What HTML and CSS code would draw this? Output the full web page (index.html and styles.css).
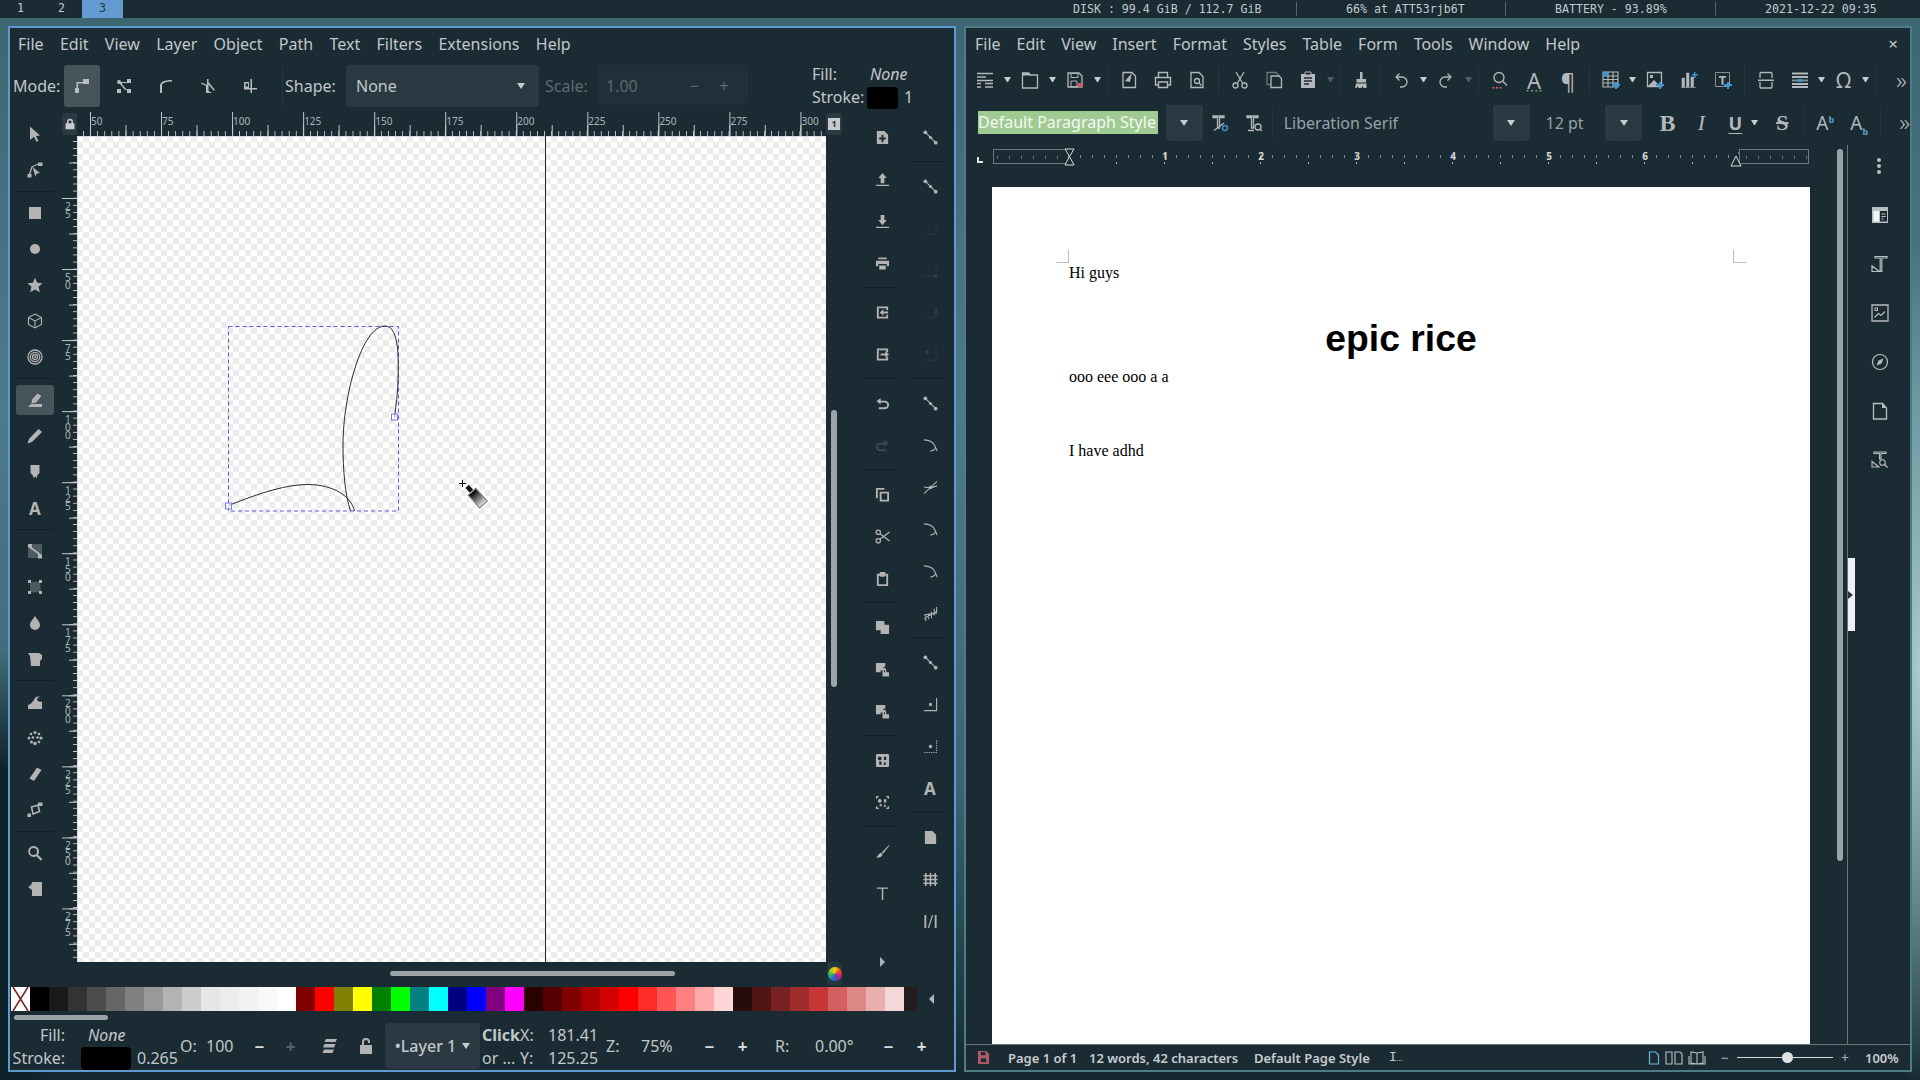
FILE: index.html
```html
<!DOCTYPE html>
<html lang="en">
<head>
  <meta charset="UTF-8">
  <title>Desktop</title>
  <link rel="stylesheet" href="styles.css">
</head>
<body>
  <svg class="defs" xmlns="http://www.w3.org/2000/svg">
    <defs>
      <linearGradient id="bottle" x1="0" y1="0" x2="0" y2="1"><stop offset="0" stop-color="#000"/><stop offset="1" stop-color="#ddd"/></linearGradient>
    </defs>
    <!-- inkscape tools -->
    <symbol id="sel" viewBox="0 0 16 16"><path d="M3 .5l10 9-4 .4 2.4 5-2 .9-2.3-5L3 14z"/></symbol>
    <symbol id="node" viewBox="0 0 16 16"><path d="M.5 12h4v3.500h-4zM11 .5h4.500v3.500H11zM2 12l2.400-7.500L11 1.600l.4 1L5.500 5.300 3.500 12zM5.500 5l7.500 6-3.500.8-1 3.200z"/></symbol>
    <symbol id="rect" viewBox="0 0 16 16"><rect x="2" y="2" width="12" height="12"/></symbol>
    <symbol id="circ" viewBox="0 0 16 16"><circle cx="8" cy="8" r="5"/></symbol>
    <symbol id="star" viewBox="0 0 16 16"><path d="M8 .8l2.200 5 5.300.4-4 3.600 1.300 5.400L8 12.400l-4.800 2.800 1.300-5.400-4-3.600 5.300-.4z"/></symbol>
    <symbol id="box3d" viewBox="0 0 16 16"><path d="M8 1l6.500 3.500v7L8 15l-6.500-3.500v-7zM1.500 4.500L8 8l6.500-3.500M8 8v7" fill="none" stroke="currentColor" stroke-width="1.100"/></symbol>
    <symbol id="spiral" viewBox="0 0 16 16"><circle cx="8" cy="8" r="7" fill="none" stroke="currentColor" stroke-width="1.300"/><circle cx="8" cy="8" r="4.700" fill="none" stroke="currentColor" stroke-width="1.300"/><circle cx="8" cy="8" r="2.500" fill="none" stroke="currentColor" stroke-width="1.300"/><circle cx="8" cy="8" r="1"/></symbol>
    <symbol id="pen" viewBox="0 0 16 16"><path d="M10.500 1.500l4 2.500-5.500 6.500-4.500 1L5 7.500zM1 15l3-3h11v3z"/></symbol>
    <symbol id="pencil" viewBox="0 0 16 16"><path d="M11.500 1l3.500 3L5 14l-4.500 1.500L2 11z"/></symbol>
    <symbol id="nib" viewBox="0 0 16 16"><path d="M3.500 1h9v8l-2 2-1 3.500L8 12l-1 2.500L5.500 11l-2-2z"/></symbol>
    <symbol id="grad" viewBox="0 0 16 16"><rect x="1" y="1" width="14" height="14" fill="#4d5a61"/><path d="M1 1h4v3.500L15 12v3.500h-4V11L1 4z"/></symbol>
    <symbol id="mesh" viewBox="0 0 16 16"><path d="M3 3l10-.5 1 10.500-11 .5z" fill="#4d5a61"/><path d="M1 1h3v3H1zM12 1h3v3h-3zM1 12h3v3H1zM12 12h3v3h-3z"/></symbol>
    <symbol id="drop" viewBox="0 0 16 16"><path d="M8 1c1.500 3 5 5.500 5 9a5 5 0 01-10 0c0-3.500 3.500-6 5-9z"/></symbol>
    <symbol id="bucket" viewBox="0 0 16 16"><path d="M1 2h11l3 2v4l-2 2v5H4L3 5z"/></symbol>
    <symbol id="tweak" viewBox="0 0 16 16"><path d="M1 15v-4l3-1.500 3-3.500c.5-3 4-4.500 6.500-3-2-.2-3.800 1-3.300 3 .5 1.500 2.300 2 4.800 1.500V15z"/></symbol>
    <symbol id="spray" viewBox="0 0 16 16"><circle cx="8" cy="2.500" r="1.500"/><circle cx="4" cy="4" r="1.300"/><circle cx="12" cy="4" r="1.300"/><circle cx="2" cy="8" r="1.500"/><circle cx="6" cy="7.500" r="1.300"/><circle cx="10.500" cy="7.500" r="1.300"/><circle cx="14" cy="8" r="1.600"/><circle cx="4.500" cy="12" r="1.500"/><circle cx="8" cy="13.500" r="1.800"/><circle cx="12" cy="12" r="1.300"/></symbol>
    <symbol id="eraser" viewBox="0 0 16 16"><path d="M10 1.500l4.500 2.500L7 15l-4.500-2.500z"/></symbol>
    <symbol id="conn" viewBox="0 0 16 16"><path d="M4.500 5L11 3l1.500 6.500L6 12z" fill="none" stroke="currentColor" stroke-width="1.600"/><path d="M11 .5h4.500V4H11zM.5 11.500H4V15H.5z"/></symbol>
    <symbol id="zoom" viewBox="0 0 16 16"><path d="M6.500 1a5.500 5.500 0 014.400 8.800l4.500 4.500-1.500 1.500-4.500-4.500A5.500 5.500 0 116.500 1zm0 2a3.500 3.500 0 100 7 3.500 3.500 0 000-7z" fill-rule="evenodd"/></symbol>
    <symbol id="page" viewBox="0 0 16 16"><path d="M5 1h10v14H5V9L1 6l2.500-.5L1 4l3 .5z"/></symbol>
    <!-- inkscape commands -->
    <symbol id="newdoc" viewBox="0 0 16 16"><path d="M2 1h8l4 4v10H2zM7 5v3H4.500v2H7v3h2v-3h2.500V8H9V5z" fill-rule="evenodd"/></symbol>
    <symbol id="up" viewBox="0 0 16 16"><path d="M8 1l4.500 5.500H10V12H6V6.500H3.500zM1 13.500h14V15H1z"/></symbol>
    <symbol id="down" viewBox="0 0 16 16"><path d="M6 1h4v5.500h2.500L8 12 3.500 6.500H6zM1 13.500h14V15H1z"/></symbol>
    <symbol id="print" viewBox="0 0 16 16"><path d="M3.500 1.500h9v2h-9zM1 5h14v6h-2.500V8.500h-9V11H1zM4.500 10h7v4.500h-7z"/></symbol>
    <symbol id="imp" viewBox="0 0 16 16"><path d="M2 1.500h12v4h-2v-2H4v9h8v-2h2v4H2zM14 7H9V4.500L5 8l4 3.500V9h5z"/></symbol>
    <symbol id="exp" viewBox="0 0 16 16"><path d="M2 1.500h12v4h-2v-2H4v9h8v-2h2v4H2zM6 7h5V4.500L15 8l-4 3.500V9H6z"/></symbol>
    <symbol id="undo" viewBox="0 0 16 16"><path d="M6 2L1.500 5.500 6 9V7h4.500a2.500 2.500 0 010 5H4v2h6.500a4.500 4.500 0 000-9H6z"/></symbol>
    <symbol id="redo" viewBox="0 0 16 16"><path d="M10 2l4.500 3.500L10 9V7H5.500a2.500 2.500 0 000 5H12v2H5.500a4.500 4.500 0 010-9H10z"/></symbol>
    <symbol id="copy" viewBox="0 0 16 16"><path d="M1 1h9v2H3v9H1zM5 5h10v10.500H5zm2 2v6.500h6V7z" fill-rule="evenodd"/></symbol>
    <symbol id="cut" viewBox="0 0 16 16"><circle cx="3.500" cy="3.500" r="2.300" fill="none" stroke="currentColor" stroke-width="1.400"/><circle cx="3.500" cy="12.500" r="2.300" fill="none" stroke="currentColor" stroke-width="1.400"/><path d="M5.300 5L15.500 12.800M5.300 11L15.500 3.200" fill="none" stroke="currentColor" stroke-width="1.500"/></symbol>
    <symbol id="paste" viewBox="0 0 16 16"><path d="M5 1h6v2h3v13H2V3h3zm-1 4v9h8V5h-1.500v1h-5V5z" fill-rule="evenodd"/></symbol>
    <symbol id="dup" viewBox="0 0 16 16"><path d="M1 1h9v4h5v10H6v-4H1z"/></symbol>
    <symbol id="clone" viewBox="0 0 16 16"><path d="M1 1h10v4H9v4H6v2H1zM8 11V8.500a2 2 0 014 0V11h3v4.500H8zm1.500-2.500V11h1V8.500z"/></symbol>
    <symbol id="group" viewBox="0 0 16 16"><path d="M2.500 1h11A1.500 1.500 0 0115 2.500v11a1.500 1.500 0 01-1.500 1.500h-11A1.500 1.500 0 011 13.500v-11A1.500 1.500 0 012.500 1zM6 4a2 2 0 100 3.500A2 2 0 006 4zm3.500 0v3.500H12V4zm-5 5v3.500H7V9zm6 0L9 12.500h3z" fill-rule="evenodd"/></symbol>
    <symbol id="ungroup" viewBox="0 0 16 16"><path d="M1 4V1h3v1.500H2.500V4zM12 1h3v3h-1.500V2.500H12zM1 12h1.500v1.500H4V15H1zM15 12v3h-3v-1.500h1.500V12zM6 4.500a2 2 0 100 3.500 2 2 0 000-3.500zm3.500 0V8H12V4.500zM5 9.500V12h2V9.500zm5.500 0L9 12.500h3z"/></symbol>
    <symbol id="brush" viewBox="0 0 16 16"><path d="M15 1L7 9l1.500 1.500L15.500 1.500zM6.500 9.500c-2.500 0-3 3-5.500 5 3 .5 7-.5 7-3.500z"/></symbol>
    <symbol id="bigt" viewBox="0 0 16 16"><path d="M2 1.500h12V3H8.800v12H7.200V3H2z"/></symbol>
    <!-- snap bar -->
    <symbol id="sn1" viewBox="0 0 16 16"><path d="M2 2l11 11" stroke="currentColor" stroke-width="1.200" fill="none"/><circle cx="2.500" cy="2.500" r="2"/><circle cx="8" cy="8" r="1.700"/><circle cx="13.500" cy="13.500" r="2"/></symbol>
    <symbol id="sn2" viewBox="0 0 16 16"><path d="M1.500 14h12.500V1" fill="none" stroke="currentColor" stroke-dasharray="1.200 1"/></symbol>
    <symbol id="sn3" viewBox="0 0 16 16"><path d="M1.500 14h11.500M14 1v11" fill="none" stroke="currentColor" stroke-dasharray="1.200 1"/><rect x="12" y="12" width="3" height="3"/></symbol>
    <symbol id="sn4" viewBox="0 0 16 16"><path d="M1.500 14h12.500V1" fill="none" stroke="currentColor" stroke-dasharray="1.200 1"/><rect x="12.500" y="6" width="3" height="3"/></symbol>
    <symbol id="sn5" viewBox="0 0 16 16"><path d="M1.500 14h12.500V1" fill="none" stroke="currentColor" stroke-dasharray="1.200 1"/><rect x="3" y="4" width="3" height="3"/></symbol>
    <symbol id="sn6" viewBox="0 0 16 16"><path d="M1 2c5 0 10 2 12 7 .5 2 0 4-5 5M13 9c.5 1 1.500 3 2 5" fill="none" stroke="currentColor" stroke-width="1.100"/></symbol>
    <symbol id="sn7" viewBox="0 0 16 16"><path d="M1 14.500L15 1.500M1 7.500c5 1 9 1 14-1" fill="none" stroke="currentColor" stroke-width="1.100"/><circle cx="8" cy="8" r="1.800"/></symbol>
    <symbol id="sn8" viewBox="0 0 16 16"><path d="M1 13.500l14-8M1 9.500l14-2M3 10v6M6 8v6M9 6v7M12 3v7M14.500 1v6" fill="none" stroke="currentColor" stroke-width="1.100"/></symbol>
    <symbol id="sn9" viewBox="0 0 16 16"><path d="M1 14.500h13.500V1" fill="none" stroke="currentColor" stroke-width="1.200"/><rect x="6.500" y="6.500" width="3" height="3"/></symbol>
    <symbol id="sn10" viewBox="0 0 16 16"><path d="M1 14.500h13.500V1" fill="none" stroke="currentColor" stroke-dasharray="1.500 1"/><circle cx="8" cy="8" r="1.800"/></symbol>
    <symbol id="snpage" viewBox="0 0 16 16"><path d="M2 1h8l4 4v10H2z"/></symbol>
    <symbol id="sngrid" viewBox="0 0 16 16"><path d="M.5 4h15M.5 8h15M.5 12h15M3 1v14M8 1v14M13 1v14" fill="none" stroke="currentColor" stroke-width="1.700"/></symbol>
    <symbol id="snguide" viewBox="0 0 16 16"><path d="M1.500 1h2v14h-2zM12.500 1h2v14h-2zM9.500 1l1.300.4L6.500 15l-1.300-.4z"/></symbol>
    <!-- ctl bar modes -->
    <symbol id="m1" viewBox="0 0 16 16"><path d="M1 10h4v5H1zM2.500 4H9V1h6v5H9V5.500H4V10H2.500z"/></symbol>
    <symbol id="m2" viewBox="0 0 16 16"><path d="M1 11h4v4H1zM11 1h4v4h-4zM11 11h4v4h-4zM3 2a2 2 0 110 4 2 2 0 010-4zM5 4h6v1H6v1L11 12H9L4 6z"/></symbol>
    <symbol id="m3" viewBox="0 0 16 16"><path d="M2 15V8c0-4 4-6 12-6v1.500C7 3.500 4 5 4 8v7z"/></symbol>
    <symbol id="m4" viewBox="0 0 16 16"><path d="M7 1h1.500v3L15 12l-1 1-5.500-6.500V13L12 15H6V8L1 5.500l.5-1L7 7z"/></symbol>
    <symbol id="m5" viewBox="0 0 16 16"><path d="M2 4h5v6H2zM8.500 1H10v9h5v1.500h-5V15H8.500V11.500H2V10h6.500zM3.500 5.500v3H6v-3z" fill-rule="evenodd"/></symbol>
    <symbol id="layers" viewBox="0 0 16 16"><path d="M4 1h11l-1.500 3H2.500zM2.500 6h11L12 9.500H1zM2 11.500h10L10.500 15H.5z"/></symbol>
    <symbol id="lock" viewBox="0 0 16 16"><path d="M8 1a4 4 0 014 4v2h2v8H2V7h2V5a4 4 0 014-4zm0 2a2 2 0 00-2 2v2h4V5a2 2 0 00-2-2z" fill-rule="evenodd"/></symbol>
    <symbol id="unlock" viewBox="0 0 16 16"><path d="M8 0a4 4 0 014 4v1h-2V4a2 2 0 00-4 0v3h8v9H2V7h2V4a4 4 0 014-4z"/></symbol>
    <!-- writer -->
    <symbol id="w-tmpl" viewBox="0 0 18 18"><path d="M1 2.500h16M1 6h9M1 9.500h16M1 12.500h4M9 12.500h8M1 16h4M9 16h8" fill="none" stroke="currentColor" stroke-width="1.300"/></symbol>
    <symbol id="w-open" viewBox="0 0 18 18"><path d="M1.500 2h6l2 2h7v13h-15z" fill="none" stroke="currentColor" stroke-width="1.300"/><path d="M2 2h6l1.500 2.500H2z"/></symbol>
    <symbol id="w-save" viewBox="0 0 18 18"><path d="M2 2h11l3 3v11H2z" fill="none" stroke="currentColor" stroke-width="1.300"/><path d="M5 2.500h7v4H5zM5 10h6v6H5z" fill="none" stroke="currentColor"/><circle cx="14" cy="14" r="2.300" fill="#e54d5e"/></symbol>
    <symbol id="w-pdf" viewBox="0 0 18 18"><path d="M3 1.500h9l3.500 3.500v11.500H3z" fill="none" stroke="currentColor" stroke-width="1.300"/><path d="M12 2l-7 8 5 1 1-5z"/></symbol>
    <symbol id="w-print" viewBox="0 0 18 18"><path d="M4.500 6V1.500h9V6M4.500 14H1.500V6.500h15V14h-3M4.500 11h9v5.500h-9z" fill="none" stroke="currentColor" stroke-width="1.400"/></symbol>
    <symbol id="w-prev" viewBox="0 0 18 18"><path d="M3 1.500h8l4 4v11H3z" fill="none" stroke="currentColor" stroke-width="1.300"/><circle cx="9" cy="10" r="2.500" fill="none" stroke="currentColor" stroke-width="1.300"/><path d="M11 12l2.500 2.500" stroke="currentColor" stroke-width="1.300"/></symbol>
    <symbol id="w-cut" viewBox="0 0 18 18"><path d="M5 1l6.500 11M13 1L6.500 12" fill="none" stroke="currentColor" stroke-width="1.300"/><circle cx="4.500" cy="14.500" r="2.500" fill="none" stroke="currentColor" stroke-width="1.300"/><circle cx="13.500" cy="14.500" r="2.500" fill="none" stroke="currentColor" stroke-width="1.300"/></symbol>
    <symbol id="w-copy" viewBox="0 0 18 18"><path d="M2 1.500h9l3 3v9H2z" fill="none" stroke="currentColor" stroke-opacity=".55" stroke-width="1.300"/><path d="M6 5h8l2.500 2.500v9H6z" fill="#1b2b34" stroke="currentColor" stroke-width="1.300"/></symbol>
    <symbol id="w-paste" viewBox="0 0 18 18"><path d="M2 3h14v14H2z"/><path d="M6 1h6v3H6z" fill="#1b2b34" stroke="currentColor"/><path d="M5 7h8M5 10h8M5 13h5" stroke="#1b2b34" stroke-width="1.300"/></symbol>
    <symbol id="w-clone" viewBox="0 0 18 18"><path d="M8 1h2.500v7H14v3.500H4.500V8H8zM4 12.500h10.500V17h-3l-1-2-1 2h-3l-1-2-1 2H3z"/></symbol>
    <symbol id="w-undo" viewBox="0 0 18 18"><path d="M5 6h5a4.500 4.500 0 010 10h-2M7.500 2.500L4 6l3.500 3.500" fill="none" stroke="currentColor" stroke-width="1.300"/></symbol>
    <symbol id="w-redo" viewBox="0 0 18 18"><path d="M13 6H8a4.500 4.500 0 000 10h2M10.500 2.500L14 6l-3.500 3.500" fill="none" stroke="currentColor" stroke-width="1.300"/></symbol>
    <symbol id="w-find" viewBox="0 0 18 18"><circle cx="8" cy="6.500" r="5" fill="none" stroke="currentColor" stroke-width="1.300"/><path d="M12 10.500l4 4" stroke="currentColor" stroke-width="1.500"/><path d="M1.500 16h2v1.500h-2zM5 16h2v1.500H5zM8.500 16h2v1.500h-2z" fill="#d9646a"/></symbol>
    <symbol id="w-spell" viewBox="0 0 18 18"><path d="M1.500 16h2v1.500h-2zM6 16h2v1.500H6zM10.500 16h2v1.500h-2zM14.500 16h2v1.500h-2z" fill="#63a663"/></symbol>
    <symbol id="w-table" viewBox="0 0 18 18"><path d="M1 1h15v15H1zM1 5h15M1 8.500h15M1 12h15M6 1v15M11 1v15" fill="none" stroke="currentColor" stroke-width="1.100"/><path d="M1 1h5v4H1z" fill="#3d97d3"/><path d="M13 11h2v2h3v2h-3v3h-2v-3h-3v-2h3z" fill="#3d97d3"/></symbol>
    <symbol id="w-img" viewBox="0 0 18 18"><path d="M1.500 1.500h14v14h-14z" fill="none" stroke="currentColor" stroke-width="1.300"/><path d="M2 15l6-6 6 6z"/><rect x="4" y="4" width="3" height="3"/><path d="M13 11h2v2h3v2h-3v3h-2v-3h-3v-2h3z" fill="#3d97d3"/></symbol>
    <symbol id="w-chart" viewBox="0 0 18 18"><path d="M2 7h2.500v9H2zM6.500 2h2.500v14H6.500zM11 6h2.500v10H11zM1 16.500h15" stroke="currentColor" stroke-width=".6"/><path d="M14 1h1.500v2H18v1.500h-2.500V7H14V4.500h-2V3h2z" fill="#3d97d3"/></symbol>
    <symbol id="w-tbox" viewBox="0 0 18 18"><path d="M1.500 1.500h14v14h-14z" fill="none" stroke="currentColor" stroke-opacity=".7"/><path d="M5 5h7v1.800H9.500v7h-2v-7H5z"/><path d="M13 11h2v2h3v2h-3v3h-2v-3h-3v-2h3z" fill="#3d97d3"/></symbol>
    <symbol id="w-break" viewBox="0 0 18 18"><path d="M3 7V2.500A1 1 0 014 1.500h10a1 1 0 011 1V7M3 11v5a1 1 0 001 1h10a1 1 0 001-1v-5" fill="none" stroke="currentColor" stroke-width="1.300"/><path d="M1 8.500h16v1.500H1z"/></symbol>
    <symbol id="w-field" viewBox="0 0 18 18"><path d="M1 1.500h16v2H1zM1 5h16v2H1zM1 12h16v2H1zM1 15h16v2H1z"/><path d="M1 8.500h16v2H1z" opacity=".7"/><rect x="7" y="8" width="4" height="3" fill="#3d97d3"/></symbol>
    <symbol id="w-clear1" viewBox="0 0 18 18"><path d="M2 2h11v1.500H8.500V14h-2V3.500H2zM3 16.500L13 9" fill="none" stroke="currentColor" stroke-width="1.300"/><circle cx="14" cy="14" r="2.500" fill="none" stroke="#3d97d3" stroke-width="1.300"/></symbol>
    <symbol id="w-clear2" viewBox="0 0 18 18"><path d="M2 2h11v1.500H8.500V14h-2V3.500H2zM3 16.500h6" fill="none" stroke="currentColor" stroke-width="1.300"/><circle cx="13" cy="13" r="3" fill="none" stroke="currentColor" stroke-width="1.300"/><path d="M15 15l2 2" stroke="currentColor" stroke-width="1.300"/></symbol>
    <symbol id="s-deck" viewBox="0 0 18 18"><path d="M1 1h16v16H1z"/><path d="M2.500 5H8v10.500H2.500z" fill="#f2f4f5"/><path d="M9 5h7v10.500H9z" fill="#1b2b34"/><path d="M10.500 8h4M10.500 10.500h4M10.500 13h2" stroke="#c4c8ca"/></symbol>
    <symbol id="s-style" viewBox="0 0 18 18"><path d="M4 1.500h12V3h-5.200v13.500H9.200V3H4zM1 16.500v-5.500L8.500 16.500z" fill="none" stroke="currentColor" stroke-width="1.200"/></symbol>
    <symbol id="s-img" viewBox="0 0 18 18"><path d="M1 1h16v16H1z" fill="none" stroke="currentColor" stroke-width="1.300"/><path d="M3.500 13.500l4-4 2.500 2 4-4" fill="none" stroke="currentColor" stroke-width="1.100"/><rect x="4" y="4" width="2.500" height="2.500" fill="none" stroke="currentColor"/></symbol>
    <symbol id="s-nav" viewBox="0 0 18 18"><circle cx="9" cy="9" r="7.500" fill="none" stroke="currentColor" stroke-width="1.200"/><path d="M12.500 5.500L10.500 10.500 5.500 12.500 7.500 7.500z"/></symbol>
    <symbol id="s-page" viewBox="0 0 18 18"><path d="M2.500 1.500h9l4 4.500v11h-13z" fill="none" stroke="currentColor" stroke-width="1.300"/><path d="M11 1.500l4.500 4.500H11z"/></symbol>
    <symbol id="s-find" viewBox="0 0 18 18"><path d="M3 1h12v1.500h-5V8H8.500V2.500H3zM1 16V10.500L8 16z" fill="none" stroke="currentColor" stroke-width="1.100"/><circle cx="11.500" cy="11.500" r="2.800" fill="none" stroke="currentColor" stroke-width="1.100"/><path d="M13.500 13.500l3 3" stroke="currentColor" stroke-width="1.200"/></symbol>
    <symbol id="st-save" viewBox="0 0 12 14"><path d="M0 0h9l3 3v11H0z" fill="#b05a66"/><path d="M3 1h5v3.500H3z" fill="#1b2b34"/><path d="M3 8h6v4H3z" fill="#1b2b34"/></symbol>
    <symbol id="st-one" viewBox="0 0 12 14"><path d="M1.500 1h6l3 3v9h-9z" fill="none" stroke="#6fb3dd" stroke-width="1.200"/></symbol>
    <symbol id="st-two" viewBox="0 0 18 14"><path d="M1 1h6v12H1zM10 1h5l2 2v10h-7z" fill="none" stroke="currentColor" stroke-width="1.100"/></symbol>
    <symbol id="st-book" viewBox="0 0 18 14"><path d="M9 2L3 1v11l6 1 6-1V1zM9 2v11M1 5v8h16V5" fill="none" stroke="currentColor" stroke-width="1.100"/></symbol>
  </svg>

  <div class="topbar">
    <div class="ws">1</div>
    <div class="ws">2</div>
    <div class="ws ws-on">3</div>
    <div class="top-info">
      <span class="ti-disk">DISK : 99.4 GiB / 112.7 GiB</span>
      <span class="ti-wifi">66% at ATT53rjb6T</span>
      <span class="ti-bat">BATTERY - 93.89%</span>
      <span class="ti-date">2021-12-22 09:35</span>
    </div>
  </div>

  <div class="desktop">

    <!-- inkscape -->
    <div class="win win-focus">
      <div class="menu">
        <span>File</span><span>Edit</span><span>View</span><span>Layer</span><span>Object</span><span>Path</span><span>Text</span><span>Filters</span><span>Extensions</span><span>Help</span>
      </div>

      <div class="ctl">
        <span class="ctl-label">Mode:</span>
        <div class="mode mode-on"><svg class="ic"><use href="#m1"/></svg></div>
        <div class="mode"><svg class="ic"><use href="#m2"/></svg></div>
        <div class="mode"><svg class="ic"><use href="#m3"/></svg></div>
        <div class="mode"><svg class="ic"><use href="#m4"/></svg></div>
        <div class="mode"><svg class="ic"><use href="#m5"/></svg></div>
        <div class="vsep"></div>
        <span class="ctl-shape">Shape:</span>
        <div class="combo"><span>None</span><i class="caret"></i></div>
        <span class="ctl-scale">Scale:</span>
        <div class="scale-in"><span>1.00</span><b>−</b><b>+</b></div>
        <div class="ctl-style">
          <span>Fill:</span><em>None</em>
          <span>Stroke:</span><div class="mini"><i class="swatch"></i><span>1</span></div>
        </div>
      </div>

      <div class="work">
        <div class="tools">
          <div class="tb"><svg class="ic"><use href="#sel"/></svg></div>
          <div class="tb"><svg class="ic"><use href="#node"/></svg></div>
          <div class="tsep"></div>
          <div class="tb"><svg class="ic"><use href="#rect"/></svg></div>
          <div class="tb"><svg class="ic"><use href="#circ"/></svg></div>
          <div class="tb"><svg class="ic"><use href="#star"/></svg></div>
          <div class="tb"><svg class="ic"><use href="#box3d"/></svg></div>
          <div class="tb"><svg class="ic"><use href="#spiral"/></svg></div>
          <div class="tsep"></div>
          <div class="tb tb-on"><svg class="ic"><use href="#pen"/></svg></div>
          <div class="tb"><svg class="ic"><use href="#pencil"/></svg></div>
          <div class="tb"><svg class="ic"><use href="#nib"/></svg></div>
          <div class="tb tb-a">A</div>
          <div class="tsep"></div>
          <div class="tb"><svg class="ic"><use href="#grad"/></svg></div>
          <div class="tb"><svg class="ic"><use href="#mesh"/></svg></div>
          <div class="tb"><svg class="ic"><use href="#drop"/></svg></div>
          <div class="tb"><svg class="ic"><use href="#bucket"/></svg></div>
          <div class="tsep"></div>
          <div class="tb"><svg class="ic"><use href="#tweak"/></svg></div>
          <div class="tb"><svg class="ic"><use href="#spray"/></svg></div>
          <div class="tb"><svg class="ic"><use href="#eraser"/></svg></div>
          <div class="tb"><svg class="ic"><use href="#conn"/></svg></div>
          <div class="tsep"></div>
          <div class="tb"><svg class="ic"><use href="#zoom"/></svg></div>
          <div class="tb"><svg class="ic"><use href="#page"/></svg></div>
        </div>

        <div class="stage">
          <div class="corner"><svg class="ic"><use href="#lock"/></svg></div>
          <div class="ruler-h">
            <span>50</span><span>75</span><span>100</span><span>125</span><span>150</span><span>175</span><span>200</span><span>225</span><span>250</span><span>275</span><span>300</span>
          </div>
          <div class="corner corner-r"><i>1</i></div>
          <div class="ruler-v">
            <span>25</span><span>50</span><span>75</span><span>100</span><span>125</span><span>150</span><span>175</span><span>200</span><span>225</span><span>250</span><span>275</span>
          </div>
          <div class="canvas">
            <svg class="drawing" width="749" height="826" viewBox="77 136 749 826">
              <path class="page-edge" d="M545.500 136V962"/>
              <rect class="bbox" x="228.500" y="326.500" width="170" height="184.500"/>
              <path class="curve" d="M228.500 505.500C262 492 287 484.500 308 484.500C333 484.500 351 496 354.500 511"/>
              <path class="curve" d="M350.500 511C345 495 343 470 343 445C343 395 362 326 385 326C401 326 398 368 398 378C398 392 396 405 394.500 417"/>
              <rect class="handle" x="225.500" y="503" width="6" height="6"/>
              <rect class="handle" x="391.500" y="414" width="6" height="6"/>
              <path class="cross" d="M459 483.500h7M462.500 480v7"/>
              <g transform="rotate(-42 476 497)">
                <rect x="470" y="489" width="13" height="20" rx="1" fill="#8a8a8a" stroke="#fff" stroke-width="1.500"/>
                <rect x="472" y="491" width="9" height="16" fill="url(#bottle)"/>
                <rect x="474" y="483" width="5" height="7" fill="#111" stroke="#fff" stroke-width=".6"/>
              </g>
            </svg>
          </div>
          <div class="vscroll"><i></i></div>
          <div></div>
          <div class="hscroll"><i></i></div>
          <div class="wheel"><i></i></div>
        </div>

        <div class="cmdbar">
          <div class="cb"><svg class="ic"><use href="#newdoc"/></svg></div>
          <div class="cb"><svg class="ic"><use href="#up"/></svg></div>
          <div class="cb"><svg class="ic"><use href="#down"/></svg></div>
          <div class="cb"><svg class="ic"><use href="#print"/></svg></div>
          <div class="csep"></div>
          <div class="cb"><svg class="ic"><use href="#imp"/></svg></div>
          <div class="cb"><svg class="ic"><use href="#exp"/></svg></div>
          <div class="csep"></div>
          <div class="cb"><svg class="ic"><use href="#undo"/></svg></div>
          <div class="cb off"><svg class="ic"><use href="#redo"/></svg></div>
          <div class="csep"></div>
          <div class="cb"><svg class="ic"><use href="#copy"/></svg></div>
          <div class="cb"><svg class="ic"><use href="#cut"/></svg></div>
          <div class="cb"><svg class="ic"><use href="#paste"/></svg></div>
          <div class="csep"></div>
          <div class="cb"><svg class="ic"><use href="#dup"/></svg></div>
          <div class="cb"><svg class="ic"><use href="#clone"/></svg></div>
          <div class="cb"><svg class="ic"><use href="#clone"/></svg></div>
          <div class="csep"></div>
          <div class="cb"><svg class="ic"><use href="#group"/></svg></div>
          <div class="cb"><svg class="ic"><use href="#ungroup"/></svg></div>
          <div class="csep"></div>
          <div class="cb"><svg class="ic"><use href="#brush"/></svg></div>
          <div class="cb"><svg class="ic"><use href="#bigt"/></svg></div>
          <div class="more-arrow"></div>
        </div>

        <div class="cmdbar">
          <div class="cb"><svg class="ic"><use href="#sn1"/></svg></div>
          <div class="csep"></div>
          <div class="cb"><svg class="ic"><use href="#sn1"/></svg></div>
          <div class="cb faint"><svg class="ic"><use href="#sn2"/></svg></div>
          <div class="cb faint"><svg class="ic"><use href="#sn3"/></svg></div>
          <div class="cb faint"><svg class="ic"><use href="#sn4"/></svg></div>
          <div class="cb faint"><svg class="ic"><use href="#sn5"/></svg></div>
          <div class="csep"></div>
          <div class="cb"><svg class="ic"><use href="#sn1"/></svg></div>
          <div class="cb"><svg class="ic"><use href="#sn6"/></svg></div>
          <div class="cb"><svg class="ic"><use href="#sn7"/></svg></div>
          <div class="cb"><svg class="ic"><use href="#sn6"/></svg></div>
          <div class="cb"><svg class="ic"><use href="#sn6"/></svg></div>
          <div class="cb"><svg class="ic"><use href="#sn8"/></svg></div>
          <div class="csep"></div>
          <div class="cb"><svg class="ic"><use href="#sn1"/></svg></div>
          <div class="cb"><svg class="ic"><use href="#sn9"/></svg></div>
          <div class="cb"><svg class="ic"><use href="#sn10"/></svg></div>
          <div class="cb cb-a">A</div>
          <div class="csep"></div>
          <div class="cb"><svg class="ic"><use href="#snpage"/></svg></div>
          <div class="cb"><svg class="ic"><use href="#sngrid"/></svg></div>
          <div class="cb"><svg class="ic"><use href="#snguide"/></svg></div>
        </div>
      </div>

      <div class="palette-row">
        <div class="palette">
          <i class="sw sw-none"><svg viewBox="0 0 19 24"><path d="M2 0l15 24M17 0L2 24"/></svg></i>
          <i class="sw c-000"></i><i class="sw c-1a"></i><i class="sw c-33"></i><i class="sw c-4d"></i><i class="sw c-66"></i><i class="sw c-80"></i><i class="sw c-99"></i><i class="sw c-b3"></i><i class="sw c-cc"></i><i class="sw c-e6"></i><i class="sw c-ec"></i><i class="sw c-f2"></i><i class="sw c-f9"></i><i class="sw c-ff"></i>
          <i class="sw c-maroon"></i><i class="sw c-red"></i><i class="sw c-olive"></i><i class="sw c-yellow"></i><i class="sw c-green"></i><i class="sw c-lime"></i><i class="sw c-teal"></i><i class="sw c-cyan"></i><i class="sw c-navy"></i><i class="sw c-blue"></i><i class="sw c-purple"></i><i class="sw c-magenta"></i>
          <i class="sw r1"></i><i class="sw r2"></i><i class="sw r3"></i><i class="sw r4"></i><i class="sw r5"></i><i class="sw r6"></i><i class="sw r7"></i><i class="sw r8"></i><i class="sw r9"></i><i class="sw r10"></i><i class="sw r11"></i>
          <i class="sw d1"></i><i class="sw d2"></i><i class="sw d3"></i><i class="sw d4"></i><i class="sw d5"></i><i class="sw d6"></i><i class="sw d7"></i><i class="sw d8"></i><i class="sw d9"></i>
          <i class="sw d0"></i>
        </div>
        <i class="pal-arrow"></i>
      </div>
      <div class="pal-scroll"><i></i></div>

      <div class="status">
        <div class="st-style">
          <span class="st-l">Fill:</span><em>None</em>
          <span class="st-l">Stroke:</span><div class="mini"><i class="swatch swatch-w"></i><span>0.265</span></div>
        </div>
        <span class="st-o">O:</span><span class="st-val">100</span>
        <b class="pm pm-a">−</b><b class="pm pm-dim">+</b>
        <svg class="ic ic-layers"><use href="#layers"/></svg>
        <svg class="ic ic-lock"><use href="#unlock"/></svg>
        <div class="layer-box">•Layer 1<i class="caret"></i></div>
        <div class="st-msg"><strong>Click</strong><span>or ...</span></div>
        <div class="st-xy">
          <span>X:</span><span class="num">181.41</span>
          <span>Y:</span><span class="num">125.25</span>
        </div>
        <span class="st-z">Z:</span><span class="st-zv">75%</span>
        <b class="pm pm-b">−</b><b class="pm">+</b>
        <span class="st-r">R:</span><span class="st-rv">0.00°</span>
        <b class="pm pm-c">−</b><b class="pm">+</b>
      </div>
    </div>

    <!-- libreoffice writer -->
    <div class="win">
      <div class="menu menu-w">
        <span>File</span><span>Edit</span><span>View</span><span>Insert</span><span>Format</span><span>Styles</span><span>Table</span><span>Form</span><span>Tools</span><span>Window</span><span>Help</span>
        <span class="close">×</span>
      </div>

      <div class="tbar">
        <div class="ib"><svg class="wic"><use href="#w-tmpl"/></svg></div><i class="dd"></i>
        <div class="ib"><svg class="wic"><use href="#w-open"/></svg></div><i class="dd"></i>
        <div class="ib"><svg class="wic"><use href="#w-save"/></svg></div><i class="dd"></i>
        <div class="hsep"></div>
        <div class="ib"><svg class="wic"><use href="#w-pdf"/></svg></div>
        <div class="ib"><svg class="wic"><use href="#w-print"/></svg></div>
        <div class="ib"><svg class="wic"><use href="#w-prev"/></svg></div>
        <div class="hsep"></div>
        <div class="ib"><svg class="wic"><use href="#w-cut"/></svg></div>
        <div class="ib"><svg class="wic"><use href="#w-copy"/></svg></div>
        <div class="ib"><svg class="wic"><use href="#w-paste"/></svg></div><i class="dd dd-off"></i>
        <div class="hsep hsep-n"></div>
        <div class="ib ib-n"><svg class="wic"><use href="#w-clone"/></svg></div>
        <div class="hsep hsep-m"></div>
        <div class="ib"><svg class="wic"><use href="#w-undo"/></svg></div><i class="dd"></i>
        <div class="ib"><svg class="wic"><use href="#w-redo"/></svg></div><i class="dd dd-off"></i>
        <div class="hsep"></div>
        <div class="ib"><svg class="wic"><use href="#w-find"/></svg></div>
        <div class="ib ib-glyph">A<svg class="spell"><use href="#w-spell"/></svg></div>
        <div class="ib ib-glyph">¶</div>
        <div class="hsep"></div>
        <div class="ib ib-t"><svg class="wic"><use href="#w-table"/></svg></div><i class="dd"></i>
        <div class="ib"><svg class="wic"><use href="#w-img"/></svg></div>
        <div class="ib"><svg class="wic"><use href="#w-chart"/></svg></div>
        <div class="ib"><svg class="wic"><use href="#w-tbox"/></svg></div>
        <div class="hsep"></div>
        <div class="ib"><svg class="wic"><use href="#w-break"/></svg></div>
        <div class="ib ib-t"><svg class="wic"><use href="#w-field"/></svg></div><i class="dd"></i>
        <div class="ib ib-t ib-glyph ib-om">Ω</div><i class="dd"></i>
        <div class="hsep"></div>
        <span class="chev">»</span>
      </div>

      <div class="fbar">
        <div class="para-style">Default Paragraph Style</div>
        <div class="drop-btn"><i class="caret"></i></div>
        <div class="fi fi-first"><svg class="wic"><use href="#w-clear1"/></svg></div>
        <div class="fi"><svg class="wic"><use href="#w-clear2"/></svg></div>
        <div class="hsep hsep-f"></div>
        <div class="font-name">Liberation Serif</div>
        <div class="drop-btn"><i class="caret"></i></div>
        <div class="font-size">12 pt</div>
        <div class="drop-btn drop-btn-s"><i class="caret"></i></div>
        <div class="fmt fmt-b">B</div>
        <div class="fmt fmt-i">I</div>
        <div class="fmt fmt-u">U</div><i class="dd dd-u"></i>
        <div class="fmt fmt-s">S</div>
        <div class="hsep hsep-g"></div>
        <div class="fmt fmt-sup">A<sup>b</sup></div>
        <div class="fmt fmt-sub">A<sub>b</sub></div>
        <div class="hsep hsep-g"></div>
        <span class="chev">»</span>
      </div>

      <div class="wbody">
        <div class="wmain">
          <div class="wruler">
            <i class="tab-mark"></i>
            <div class="rbox">
              <div class="rmargin rmargin-l"></div>
              <div class="rnums"><span>1</span><span>2</span><span>3</span><span>4</span><span>5</span><span>6</span><span>7</span></div>
              <div class="rmargin rmargin-r"></div>
              <svg class="indent" width="12" height="18" viewBox="0 0 12 18"><path d="M1 1h9L5.500 8.500 10 17H1l4.500-8.500z" fill="#1b2b34" stroke="#d6dadc"/></svg>
              <svg class="indent indent-r" width="12" height="12" viewBox="0 0 12 12"><path d="M1 11L6 1l5 10z" fill="#1b2b34" stroke="#d6dadc"/></svg>
            </div>
          </div>
          <div class="doc">
            <div class="sheet">
              <i class="mark mark-l"></i><i class="mark mark-r"></i>
              <p class="line">Hi guys</p>
              <h1 class="title">epic rice</h1>
              <p class="line">ooo eee ooo a a</p>
              <p class="line line-c">I have adhd</p>
            </div>
          </div>
        </div>
        <div class="wscroll"><i></i></div>
        <div class="wside">
          <i class="grip"><i class="grip-arrow"></i></i>
          <div class="dots"><i></i><i></i><i></i></div>
          <div class="si"><svg class="wic"><use href="#s-deck"/></svg></div>
          <div class="si"><svg class="wic"><use href="#s-style"/></svg></div>
          <div class="si"><svg class="wic"><use href="#s-img"/></svg></div>
          <div class="si"><svg class="wic"><use href="#s-nav"/></svg></div>
          <div class="si"><svg class="wic"><use href="#s-page"/></svg></div>
          <div class="si"><svg class="wic"><use href="#s-find"/></svg></div>
        </div>
      </div>

      <div class="wstatus">
        <svg class="st-save"><use href="#st-save"/></svg>
        <span class="ws-page">Page 1 of 1</span>
        <span class="ws-count">12 words, 42 characters</span>
        <span class="ws-style">Default Page Style</span>
        <span class="ws-cursor">I<small>…</small></span>
        <div class="views">
          <svg class="v1"><use href="#st-one"/></svg>
          <svg class="v2"><use href="#st-two"/></svg>
          <svg class="v2"><use href="#st-book"/></svg>
        </div>
        <b class="zm">−</b>
        <div class="slider"><i></i></div>
        <b class="zm">+</b>
        <span class="ws-zoom">100%</span>
      </div>
    </div>
  </div>
</body>
</html>
```

FILE: styles.css
```css
* {
  box-sizing: border-box;
}
html, body {
  margin: 0;
  height: 100%;
}
body {
  width: 1920px;
  height: 1080px;
  overflow: hidden;
  display: flex;
  flex-direction: column;
  font-family: "Noto Sans", sans-serif;
  font-size: 16px;
  color: #c2c7ca;
  background:
    radial-gradient(70px 420px at 100% 62%, #a9cdcd 0, rgba(169, 205, 205, 0) 100%),
    radial-gradient(60px 300px at 0 88%, #0f2229 0, #0f2229 60%, rgba(15, 34, 41, 0) 100%),
    linear-gradient(180deg, #3b6672 0, #4c7c88 38%, #3a6672 72%, #1c3840 94%, #132830 100%);
}
i, b, em {
  display: block;
}
.defs {
  position: absolute;
  width: 0;
  height: 0;
}
.ic {
  width: 16px;
  height: 16px;
  fill: currentColor;
  display: block;
  flex: none;
}
.wic {
  width: 18px;
  height: 18px;
  fill: currentColor;
  display: block;
}

/* top bar */
.topbar {
  height: 18px;
  display: flex;
  background: #1b2b34;
  font-family: "DejaVu Sans Mono", monospace;
  font-size: 11.600px;
  line-height: 17px;
  color: #c3cacd;
}
.ws {
  width: 41px;
  text-align: center;
}
.ws-on {
  background: #659bd3;
  color: #24343d;
}
.top-info {
  flex: 1;
  display: flex;
  font-weight: 300;
}
.top-info span {
  display: block;
  height: 14px;
  line-height: 14px;
  margin-top: 2px;
  white-space: nowrap;
}
.ti-disk { margin-left: 950px; width: 224px; border-right: 1px solid #55646c; }
.ti-wifi { margin-left: 49px; width: 160px; border-right: 1px solid #55646c; }
.ti-bat { margin-left: 49px; width: 161px; border-right: 1px solid #55646c; }
.ti-date { margin-left: 49px; }

.desktop {
  flex: 1;
  min-height: 0;
  display: flex;
  gap: 8px;
  padding: 8px;
}
.win {
  width: 948px;
  display: flex;
  flex-direction: column;
  background: #1b2b34;
  border: 2px solid #4f7b87;
}
.win-focus {
  border-color: #5f99cf;
}

/* menus */
.menu {
  height: 34px;
  flex: none;
  display: flex;
  align-items: center;
  gap: 16.300px;
  padding: 0 0 2px 8px;
  line-height: 32px;
}
.menu-w {
  padding-left: 9px;
  gap: 16px;
}
.close {
  margin-left: auto;
  margin-right: 12px;
  font-size: 17px;
}

/* inkscape tool controls */
.ctl {
  height: 50px;
  flex: none;
  display: flex;
  padding-top: 3px;
  line-height: 42px;
}
.ctl-label {
  width: 54px;
  padding-left: 3px;
}
.mode {
  width: 36px;
  height: 42px;
  margin-right: 6px;
  border-radius: 3px;
  color: #b9bdbf;
  display: flex;
  align-items: center;
  justify-content: center;
}
.mode-on {
  background: #46545c;
}
.vsep {
  width: 1px;
  height: 42px;
  margin: 0 2px 0 8px;
  background: #26353d;
}
.ctl-shape {
  width: 61px;
}
.combo {
  width: 193px;
  height: 42px;
  padding: 0 14px 0 10px;
  border-radius: 4px;
  background: #2b3a42;
  display: flex;
  align-items: center;
  justify-content: space-between;
}
.caret {
  width: 0;
  height: 0;
  border-left: 4.500px solid transparent;
  border-right: 4.500px solid transparent;
  border-top: 6px solid #c7cbcd;
}
.ctl-scale {
  width: 52px;
  margin-left: 6px;
  color: #5d6a71;
}
.scale-in {
  width: 151px;
  height: 40px;
  border-radius: 4px;
  background: #202f38;
  display: flex;
  padding-left: 9px;
  color: #5d6a71;
}
.scale-in span {
  width: 73px;
}
.scale-in b {
  width: 30px;
  font-weight: 400;
  font-size: 17px;
  text-align: center;
}
.ctl-style {
  margin-left: 64px;
  display: grid;
  grid-template-columns: 55px auto;
  grid-template-rows: 23px 22px;
  line-height: 22px;
  margin-top: -2px;
}
.ctl-style em {
  padding-left: 3px;
  font-style: italic;
}
.mini {
  display: flex;
  gap: 6px;
}
.swatch {
  width: 31px;
  height: 22px;
  background: #000;
  border-radius: 3px;
  margin-top: 1px;
}

/* inkscape work area */
.work {
  flex: 1;
  min-height: 0;
  display: flex;
}
.tools {
  width: 52px;
  flex: none;
  padding-top: 4px;
  color: #b3b3b3;
}
.tb {
  height: 36px;
  width: 38px;
  margin-left: 6px;
  border-radius: 3px;
  display: flex;
  align-items: center;
  justify-content: center;
}
.tb-on {
  height: 30px;
  margin: 3px 0 3px 6px;
  background: #46545c;
}
.tb-a {
  font-size: 17px;
  font-weight: 700;
}
.tsep {
  height: 7px;
  margin: 0 0 0 6px;
  width: 38px;
  background: linear-gradient(#141f26, #141f26) center / 100% 1px no-repeat;
}
.stage {
  flex: none;
  display: grid;
  grid-template-columns: 15px 749px 16px;
  grid-template-rows: 24px 826px 23px;
}
.corner {
  margin-top: 1px;
  height: 22px;
  background: #2b3a42;
  border-radius: 3px;
  color: #c6cacc;
  display: flex;
  align-items: center;
  justify-content: center;
}
.corner .ic {
  width: 12px;
  height: 14px;
}
.corner-r i {
  width: 12px;
  height: 12px;
  background: #c6cacc;
  color: #24343d;
  font-style: normal;
  font-size: 9px;
  font-weight: 700;
  line-height: 12px;
  text-align: center;
}
.ruler-h {
  display: flex;
  padding-left: 14px;
  font-size: 10px;
  line-height: 14px;
  color: #aeb5b8;
  overflow: hidden;
  background-image:
    linear-gradient(90deg, #c3c8ca 1px, transparent 1px),
    linear-gradient(90deg, #c3c8ca 1px, transparent 1px),
    linear-gradient(90deg, #c3c8ca 1px, transparent 1px);
  background-size: 71.050px 100%, 35.525px 11px, 7.105px 5px;
  background-position: 13px bottom, 13px bottom, 6px bottom;
  background-repeat: repeat-x;
}
.ruler-h span {
  flex: none;
  width: 71.050px;
  padding-top: 2px;
}
.ruler-v {
  overflow: hidden;
  padding-top: 63px;
  font-size: 10px;
  line-height: 8px;
  color: #aeb5b8;
  background-image:
    linear-gradient(#c3c8ca 1px, transparent 1px),
    linear-gradient(#c3c8ca 1px, transparent 1px),
    linear-gradient(#c3c8ca 1px, transparent 1px);
  background-size: 100% 71.050px, 8px 35.525px, 4px 7.105px;
  background-position: right 62px, right 26.500px, right 5px;
  background-repeat: repeat-y;
}
.ruler-v span {
  display: block;
  height: 71.050px;
  width: 11px;
  padding: 3px 0 0 3px;
  word-break: break-all;
}
.canvas {
  position: relative;
  background-color: #fff;
  background-image: conic-gradient(#ececec 25%, transparent 25% 50%, #ececec 50% 75%, transparent 75%);
  background-size: 12px 12px;
  box-shadow: inset 1px 1px 0 #d5dce9;
  overflow: hidden;
}
.drawing {
  position: absolute;
  left: 0;
  top: 0;
  fill: none;
}
.page-edge {
  stroke: #222;
  stroke-width: 1;
}
.bbox {
  stroke: #5a5ae6;
  stroke-dasharray: 4 3;
}
.curve {
  stroke: #2b2b2b;
  stroke-width: 1;
}
.handle {
  fill: rgba(255, 255, 255, .6);
  stroke: #7b7bea;
}
.cross {
  stroke: #000;
}
.vscroll {
  padding-left: 5px;
}
.vscroll i {
  width: 6px;
  height: 277px;
  margin-top: 274px;
  border-radius: 3px;
  background: #9aa3a8;
}
.hscroll {
  padding: 9px 0 0 313px;
}
.hscroll i {
  width: 285px;
  height: 5px;
  border-radius: 3px;
  background: #9aa3a8;
}
.wheel {
  background: #26363f;
  border-radius: 3px;
  margin-left: 1px;
  display: flex;
  align-items: center;
  justify-content: center;
}
.wheel i {
  width: 14px;
  height: 14px;
  border-radius: 50%;
  background: conic-gradient(#f6d309, #e8541f, #d81f76, #6a35b0, #2b6bd3, #2bb36b, #a4c61f, #f6d309);
}
.cmdbar {
  width: 48px;
  flex: none;
  margin-left: 16px;
  padding: 4px 6px 0;
  color: #b3b3b3;
}
.cmdbar + .cmdbar {
  margin-left: 0;
}
.cb {
  height: 42px;
  display: flex;
  align-items: center;
  justify-content: center;
}
.cb .ic {
  width: 15px;
  height: 15px;
}
.cb-a {
  font-size: 17px;
  font-weight: 700;
}
.off {
  color: #3b4952;
}
.faint {
  color: #34444d;
}
.csep {
  height: 7px;
  background: linear-gradient(#141f26, #141f26) center / 100% 1px no-repeat;
}
.more-arrow {
  margin: 43px auto 0;
  width: 0;
  height: 0;
  border-top: 5px solid transparent;
  border-bottom: 5px solid transparent;
  border-left: 5px solid #aeb4b7;
}

/* palette */
.palette-row {
  height: 26px;
  flex: none;
  display: flex;
  align-items: flex-end;
  padding-left: 1px;
}
.palette {
  width: 906px;
  height: 24px;
  display: flex;
  overflow: hidden;
}
.sw {
  flex: none;
  width: 19px;
  height: 24px;
}
.sw-none {
  background: #fff;
}
.sw-none svg {
  display: block;
  width: 19px;
  height: 24px;
  fill: none;
  stroke: #7a1a1a;
  stroke-width: 1.500;
}
.c-000 { background: #000; }
.c-1a { background: #1a1a1a; }
.c-33 { background: #333; }
.c-4d { background: #4d4d4d; }
.c-66 { background: #666; }
.c-80 { background: #808080; }
.c-99 { background: #999; }
.c-b3 { background: #b3b3b3; }
.c-cc { background: #ccc; }
.c-e6 { background: #e6e6e6; }
.c-ec { background: #ececec; }
.c-f2 { background: #f2f2f2; }
.c-f9 { background: #f9f9f9; }
.c-ff { background: #fff; }
.c-maroon { background: #800000; }
.c-red { background: #f00; }
.c-olive { background: #808000; }
.c-yellow { background: #ff0; }
.c-green { background: #008000; }
.c-lime { background: #0f0; }
.c-teal { background: #008080; }
.c-cyan { background: #0ff; }
.c-navy { background: #000080; }
.c-blue { background: #00f; }
.c-purple { background: #800080; }
.c-magenta { background: #f0f; }
.r1 { background: #2b0000; }
.r2 { background: #500; }
.r3 { background: #800000; }
.r4 { background: #a00; }
.r5 { background: #d40000; }
.r6 { background: #f00; }
.r7 { background: #ff2a2a; }
.r8 { background: #f55; }
.r9 { background: #ff8080; }
.r10 { background: #faa; }
.r11 { background: #ffd5d5; }
.d1 { background: #280b0b; }
.d2 { background: #501616; }
.d3 { background: #782121; }
.d4 { background: #a02c2c; }
.d5 { background: #c83737; }
.d6 { background: #d35f5f; }
.d7 { background: #de8787; }
.d8 { background: #e9afaf; }
.d9 { background: #f4d7d7; }
.d0 { background: #241c1c; }
.pal-arrow {
  width: 0;
  height: 0;
  margin: 0 0 7px 12px;
  border-top: 5px solid transparent;
  border-bottom: 5px solid transparent;
  border-right: 5px solid #aeb4b7;
}
.pal-scroll {
  height: 11px;
  flex: none;
  padding: 4px 0 0 4px;
}
.pal-scroll i {
  width: 94px;
  height: 5px;
  border-radius: 3px;
  background: #9aa3a8;
}

/* inkscape status */
.status {
  height: 48px;
  flex: none;
  display: flex;
  align-items: center;
  white-space: nowrap;
}
.st-style {
  width: 170px;
  margin-top: 2px;
  display: grid;
  grid-template-columns: 55px auto;
  grid-template-rows: 23px 23px;
  line-height: 23px;
  column-gap: 16px;
}
.st-l {
  text-align: right;
}
.st-style em {
  padding-left: 7px;
}
.swatch-w {
  width: 50px;
  height: 23px;
  margin: 0;
  border-radius: 4px;
}
.st-o { width: 26px; }
.st-val { width: 37px; }
.pm {
  width: 31px;
  flex: none;
  text-align: center;
  font-size: 17px;
  font-weight: 700;
  color: #d7dadc;
}
.pm-a { margin-left: 1px; }
.pm-dim { color: #55636b; }
.ic-layers { margin-left: 16px; color: #b3b3b3; }
.ic-lock { margin-left: 20px; color: #b3b3b3; }
.layer-box {
  width: 95px;
  height: 46px;
  margin-left: 11px;
  border-radius: 4px;
  background: #2b3a42;
  display: flex;
  align-items: center;
  justify-content: center;
  gap: 6px;
  font-weight: 500;
}
.st-msg {
  width: 38px;
  margin: 2px 0 0 2px;
  line-height: 23px;
  overflow: hidden;
}
.st-msg strong, .st-msg span {
  display: block;
}
.st-xy {
  width: 86px;
  margin-top: 2px;
  display: grid;
  grid-template-columns: 28px auto;
  line-height: 23px;
}
.st-z { width: 35px; }
.st-zv { width: 53px; }
.pm-b { margin-right: 2px; }
.st-r { margin-left: 17px; width: 40px; }
.st-rv { width: 58px; }
.pm-c { margin-right: 2px; }

/* writer toolbars */
.tbar {
  height: 43px;
  flex: none;
  display: flex;
  align-items: center;
  padding: 0 0 8px 2px;
  color: #b3b8bb;
}
.ib {
  width: 34px;
  height: 26px;
  flex: none;
  display: flex;
  align-items: center;
  justify-content: center;
  position: relative;
}
.ib-t {
  width: 33px;
}
.ib-n {
  width: 32px;
}
.ib-glyph {
  font-size: 22px;
  line-height: 26px;
}
.ib-om {
  font-size: 21px;
}
.spell {
  position: absolute;
  left: 8px;
  top: 7px;
  width: 18px;
  height: 18px;
}
.dd {
  flex: none;
  height: 0;
  width: 7px;
  border-left: 3.500px solid transparent;
  border-right: 3.500px solid transparent;
  border-top: 5px solid #c7cbcd;
  margin: 0 2px;
}
.dd-off {
  border-top-color: #4f5c63;
}
.hsep {
  width: 1px;
  height: 30px;
  flex: none;
  margin: 0 4px;
  background: #26353d;
}
.hsep-m {
  margin: 0 3px;
}
.chev {
  margin-left: 16px;
  font-size: 24px;
  font-weight: 300;
  color: #b3b8bb;
}
.fbar {
  height: 38px;
  flex: none;
  display: flex;
  align-items: flex-start;
  padding-left: 12px;
  color: #b3b8bb;
}
.para-style {
  width: 180px;
  height: 23px;
  margin-top: 6px;
  background: #9fcb93;
  color: #f4f8f2;
  line-height: 23px;
  white-space: nowrap;
  overflow: hidden;
}
.drop-btn {
  width: 37px;
  height: 36px;
  margin-left: 8px;
  background: #2b3a42;
  border-radius: 0 0 4px 4px;
  display: flex;
  align-items: center;
  justify-content: center;
}
.fi {
  width: 34px;
  height: 36px;
  display: flex;
  align-items: center;
  justify-content: center;
}
.hsep-f {
  margin: 3px 11px 0 1px;
}
.font-name {
  width: 210px;
  line-height: 36px;
  color: #97a2a7;
}
.font-name + .drop-btn {
  margin-left: -1px;
}
.font-size {
  width: 76px;
  padding-left: 16px;
  line-height: 36px;
  color: #97a2a7;
}
.drop-btn-s {
  margin-left: 0;
}
.fmt {
  width: 34px;
  height: 36px;
  text-align: center;
  line-height: 36px;
  font-family: "Liberation Serif", serif;
  font-size: 22px;
}
.fmt-b {
  margin-left: 8px;
  font-weight: 700;
  font-size: 24px;
}
.fmt-i {
  font-style: italic;
}
.fmt-u {
  font-family: "Noto Sans", sans-serif;
  font-size: 18px;
  font-weight: 700;
  text-decoration: underline;
  text-underline-offset: 3px;
}
.dd-u {
  margin: 15px 3px 0 -1px;
}
.fmt-s {
  font-size: 22px;
  font-weight: 700;
  text-decoration: line-through;
  margin-left: 4px;
}
.fmt-sup, .fmt-sub {
  font-family: "Noto Sans", sans-serif;
  font-size: 19px;
}
.fmt-sup sup, .fmt-sub sub {
  font-size: 9px;
  color: #5c9cc9;
  line-height: 0;
  font-weight: 700;
}
.hsep-g {
  margin: 3px 4px 0;
  height: 28px;
}
.fbar .chev {
  margin-left: 14px;
  line-height: 34px;
}

/* writer body */
.wbody {
  flex: 1;
  min-height: 0;
  display: flex;
}
.wmain {
  width: 871px;
  flex: none;
  display: flex;
  flex-direction: column;
}
.wruler {
  height: 44px;
  flex: none;
  display: flex;
  padding: 6px 0 0 11px;
}
.tab-mark {
  width: 6px;
  height: 6px;
  margin-top: 8px;
  border-left: 2px solid #dfe2e3;
  border-bottom: 2px solid #dfe2e3;
}
.rbox {
  position: relative;
  width: 817px;
  height: 15px;
  margin-left: 10px;
  display: flex;
  background-image:
    linear-gradient(90deg, #7b878c 1px, transparent 1px),
    linear-gradient(90deg, #aeb5b8 1px, transparent 1px);
  background-size: 12px 3px, 48px 3px;
  background-position: 3px 6px, 27px 13px;
  background-repeat: repeat-x;
}
.rmargin {
  height: 15px;
  flex: none;
  border: 1px solid #6d797f;
}
.rmargin-l {
  width: 76px;
  background: #1b2b34 linear-gradient(90deg, #6d797f 1px, transparent 1px) 3px 6px / 12px 3px repeat-x;
}
.rmargin-r {
  width: 70px;
  background: #1b2b34 linear-gradient(90deg, #6d797f 1px, transparent 1px) 6px 6px / 12px 3px repeat-x;
}
.rnums {
  width: 671px;
  flex: none;
  display: flex;
  font-size: 10px;
  font-weight: 700;
  line-height: 15px;
  color: #d6dadc;
  padding-left: 3px;
  margin-right: -1px;
}
.rnums span {
  flex: none;
  width: 96px;
  text-align: right;
}
.indent {
  position: absolute;
  left: 71px;
  top: -1px;
}
.indent-r {
  left: 737px;
  top: 6px;
}
.doc {
  flex: 1;
  min-height: 0;
  padding-left: 26px;
  overflow: hidden;
}
.sheet {
  position: relative;
  width: 818px;
  height: 100%;
  background: #fff;
  color: #000;
  padding: 77px 0 0 77px;
  font-family: "Liberation Serif", serif;
  font-size: 16px;
}
.line {
  margin: 0;
  line-height: 18px;
}
.line-c {
  margin-top: 56px;
}
.title {
  margin: 35px 0 8px -77px;
  text-align: center;
  font-family: "Liberation Sans", sans-serif;
  font-size: 37.300px;
  font-weight: 700;
  line-height: 43px;
}
.mark {
  position: absolute;
  top: 63px;
  width: 13px;
  height: 13px;
  border-bottom: 1px solid #bcbcbc;
}
.mark-l {
  left: 64px;
  border-right: 1px solid #bcbcbc;
}
.mark-r {
  left: 741px;
  border-left: 1px solid #bcbcbc;
}
.wscroll {
  width: 8px;
  flex: none;
  padding-top: 6px;
  margin-right: 2px;
}
.wscroll i {
  width: 6px;
  height: 712px;
  border-radius: 3px;
  background: #9aa3a8;
}
.wside {
  flex: 1;
  position: relative;
  border-left: 1px solid #69767c;
  margin-top: 2px;
  color: #b9bec1;
  padding-top: 13px;
}
.grip {
  position: absolute;
  left: 0;
  top: 413px;
  width: 7px;
  height: 73px;
  background: #eef0f3;
  display: flex;
  align-items: center;
}
.grip-arrow {
  width: 0;
  height: 0;
  border-top: 4px solid transparent;
  border-bottom: 4px solid transparent;
  border-left: 5px solid #26363f;
}
.dots {
  width: 5px;
  height: 16px;
  margin: 0 0 16px 29px;
  display: flex;
  flex-direction: column;
  justify-content: space-between;
}
.dots i {
  width: 4px;
  height: 4px;
  border-radius: 50%;
  background: #b9bec1;
}
.si {
  height: 49px;
  padding-left: 23px;
  display: flex;
  align-items: center;
}

/* writer status */
.wstatus {
  height: 26px;
  flex: none;
  display: flex;
  align-items: center;
  border-top: 1px solid #69767c;
  font-size: 13px;
  font-weight: 600;
  color: #c8ccce;
  white-space: nowrap;
  padding-left: 12px;
}
.st-save {
  width: 11px;
  height: 13px;
}
.ws-page { margin-left: 19px; width: 81px; }
.ws-count { width: 165px; }
.ws-style { width: 135px; }
.ws-cursor { width: 259px; font-weight: 400; font-family: "Liberation Mono", monospace; }
.ws-cursor small { font-size: 9px; }
.views {
  display: flex;
  align-items: center;
  gap: 5px;
  width: 72px;
}
.v1 { width: 12px; height: 14px; }
.v2 { width: 18px; height: 14px; color: #b9bec1; }
.zm {
  width: 10px;
  text-align: center;
  font-weight: 400;
  font-size: 14px;
  color: #a9b0b3;
}
.slider {
  position: relative;
  width: 96px;
  height: 1px;
  margin: 0 7px;
  background: #d6dadc;
}
.slider i {
  position: absolute;
  left: 45px;
  top: -5px;
  width: 11px;
  height: 11px;
  border-radius: 50%;
  background: #dfe2e3;
}
.ws-zoom {
  margin-left: 15px;
}
```
